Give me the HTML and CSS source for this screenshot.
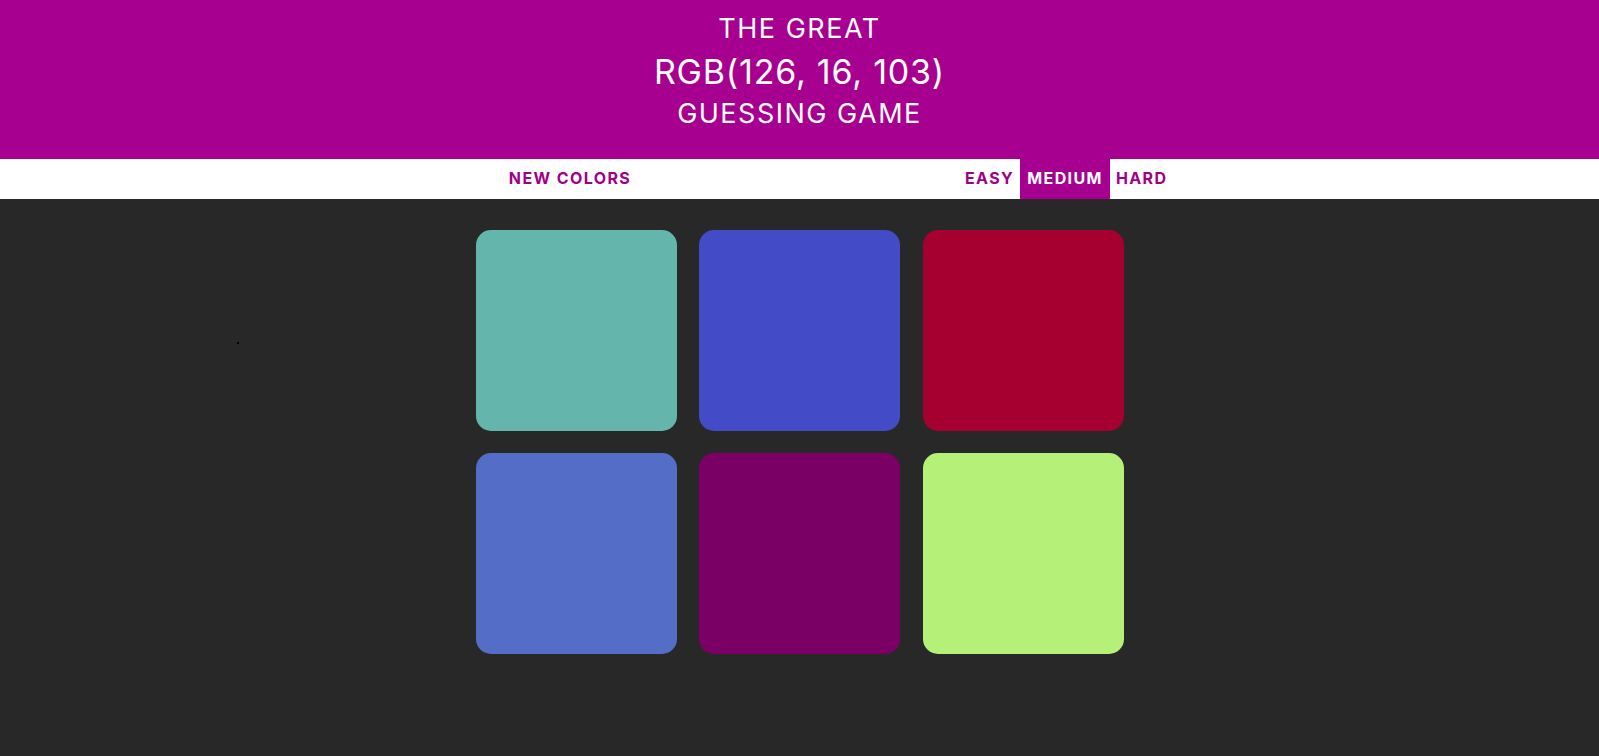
FILE: index.html
```html
<!DOCTYPE html>
<html lang="en">
<head>
<meta charset="utf-8">
<title>Color Game</title>
<link rel="stylesheet" href="styles.css">
</head>
<body>
  <header class="header">
    <h1 class="title">
      <span class="title-small">THE GREAT</span>
      <span class="title-rgb">RGB(126, 16, 103)</span>
      <span class="title-small">GUESSING GAME</span>
    </h1>
  </header>
  <nav class="stripe">
    <button class="btn btn-new">NEW COLORS</button>
    <span class="message"></span>
    <div class="modes">
      <button class="btn">EASY</button>
      <button class="btn btn-selected">MEDIUM</button>
      <button class="btn">HARD</button>
    </div>
  </nav>
  <main class="board">
    <span class="dot"></span>
    <div class="grid">
      <div class="square sq-teal"></div>
      <div class="square sq-blue"></div>
      <div class="square sq-red"></div>
      <div class="square sq-lblue"></div>
      <div class="square sq-purple"></div>
      <div class="square sq-green"></div>
    </div>
  </main>
</body>
</html>
```

FILE: styles.css
```css
* { box-sizing: border-box; }

html, body {
  margin: 0;
  padding: 0;
}

body {
  background: #282828;
  font-family: Inter, "Open Sans", sans-serif;
  min-height: 756px;
}

.header {
  background: #a70090;
  height: 159px;
  padding-top: 8px;
}

.title {
  margin: 0;
  font-weight: 400;
  color: #ffffff;
  text-align: center;
}

.title-small {
  display: block;
  font-size: 27px;
  line-height: 42px;
  letter-spacing: 1.5px;
}

.title-rgb {
  display: block;
  font-size: 34px;
  line-height: 43px;
  letter-spacing: 0.8px;
}

.stripe {
  background: #ffffff;
  height: 40px;
  display: flex;
  align-items: stretch;
  padding-left: 498px;
}

.btn {
  border: none;
  background: none;
  color: #a00089;
  font-family: inherit;
  font-weight: 700;
  font-size: 16px;
  letter-spacing: 1.4px;
  padding: 0 6px 3px;
  margin: 0;
  height: 40px;
  cursor: pointer;
}

.btn-new {
  width: 144px;
  padding: 0 0 3px;
}

.message {
  width: 317px;
}

.modes {
  display: flex;
}

.btn-selected {
  background: #a70090;
  color: #ffffff;
  padding: 0 7px 3px;
}

.board {
  position: relative;
  padding-top: 31px;
}

.dot {
  position: absolute;
  left: 237px;
  top: 143px;
  width: 2px;
  height: 2px;
  background: #000;
}

.grid {
  display: grid;
  grid-template-columns: repeat(3, 201px);
  column-gap: 22.5px;
  row-gap: 22px;
  justify-content: center;
}

.square {
  height: 201px;
  border-radius: 15px;
}

.sq-teal { background: #64b5ab; }
.sq-blue { background: #434bc6; }
.sq-red { background: #a50030; }
.sq-lblue { background: #546ec8; }
.sq-purple { background: #7a0066; }
.sq-green { background: #b5f179; }
```
